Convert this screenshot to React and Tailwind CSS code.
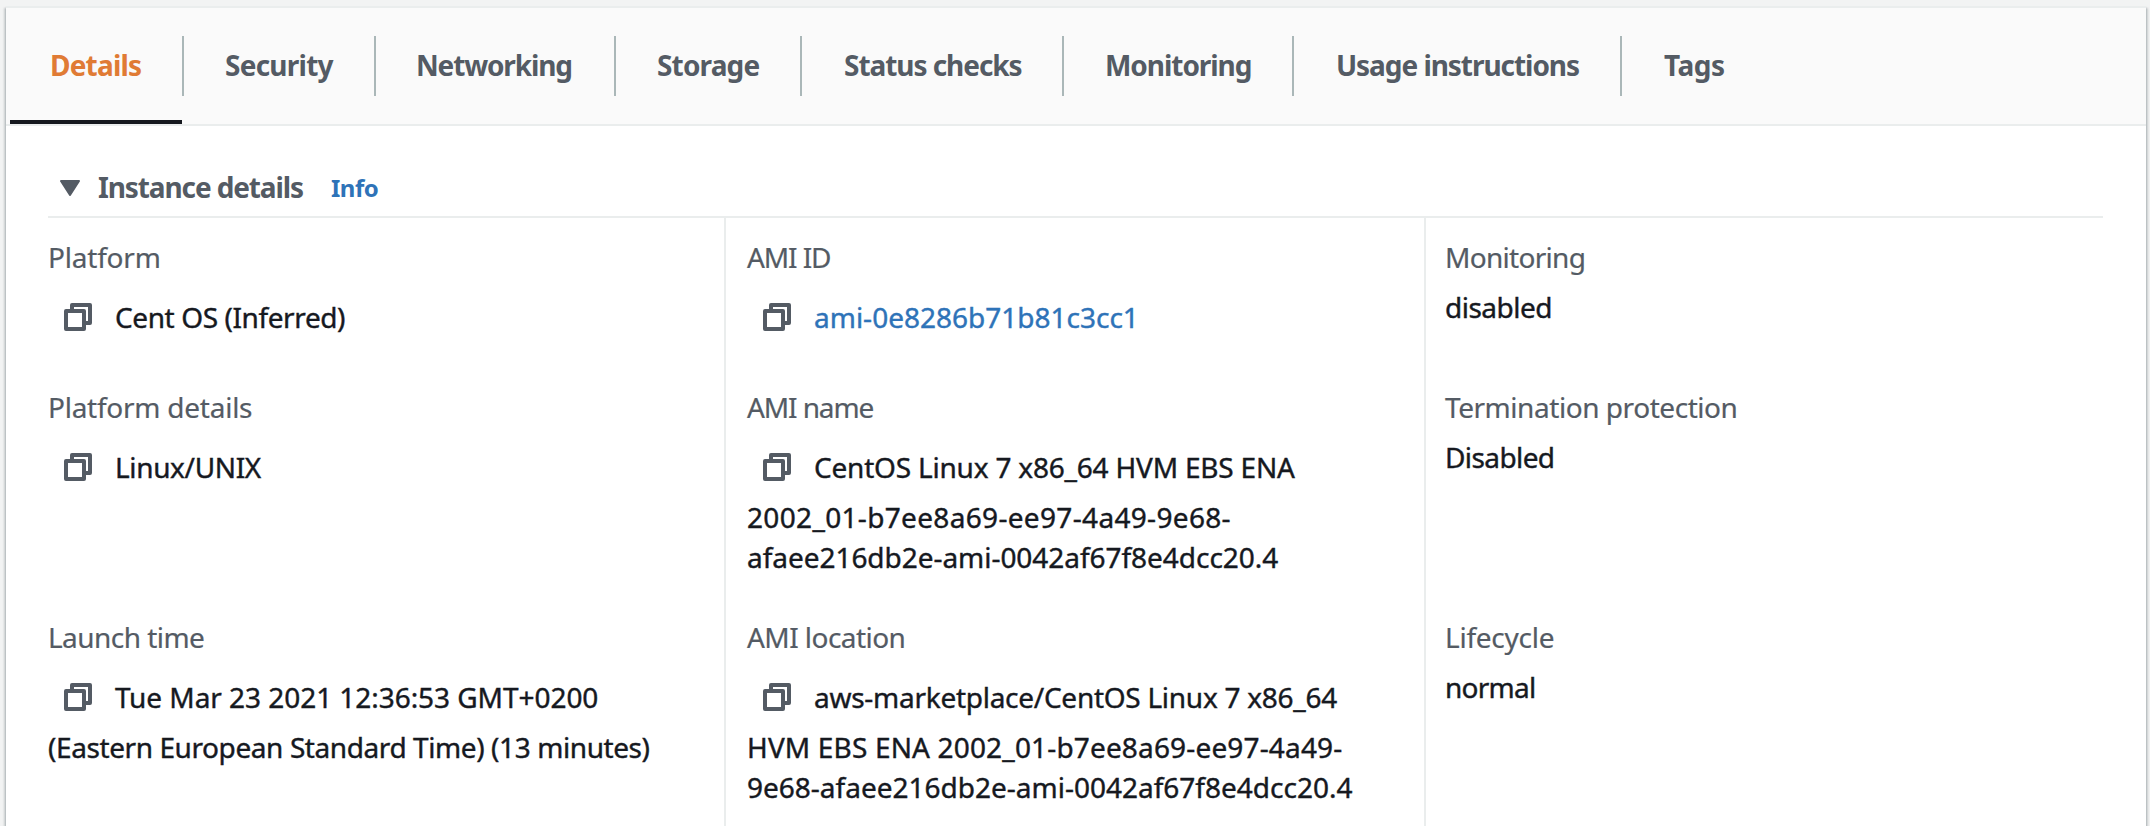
const tabs = [
  { label: 'Details', width: 'w-[172px]', text: 'pl-[40px] tracking-[-0.8px]', active: true },
  { label: 'Security', width: 'w-[190px]', text: 'pl-[41px] tracking-[-0.75px]' },
  { label: 'Networking', width: 'w-[238px]', text: 'pl-[40px] tracking-[-1.15px]' },
  { label: 'Storage', width: 'w-[184px]', text: 'pl-[41px] tracking-[-0.85px]' },
  { label: 'Status checks', width: 'w-[260px]', text: 'pl-[42px] tracking-[-1.05px]' },
  { label: 'Monitoring', width: 'w-[228px]', text: 'pl-[41px] tracking-[-1.05px]' },
  { label: 'Usage instructions', width: 'w-[326px]', text: 'pl-[42px] tracking-[-1.05px]' },
  { label: 'Tags', width: 'w-[200px]', text: 'pl-[42px] tracking-[-0.5px]', last: true },
];

const fields = [
  { label: 'Platform', ls: 'tracking-[-0.2px]', copy: true, lines: [['Cent OS (Inferred)', 'tracking-[-0.4px]']] },
  { label: 'AMI ID', ls: 'tracking-[-1.1px]', copy: true, link: true, lines: [['ami-0e8286b71b81c3cc1', 'tracking-[0px]']] },
  { label: 'Monitoring', ls: 'tracking-[-0.7px]', lines: [['disabled', 'tracking-[-0.5px]']] },
  { label: 'Platform details', ls: 'tracking-[-0.25px]', copy: true, lines: [['Linux/UNIX', 'tracking-[-0.35px]']] },
  {
    label: 'AMI name', ls: 'tracking-[-1.1px]', copy: true,
    lines: [
      ['CentOS Linux 7 x86_64 HVM EBS ENA', 'tracking-[-0.2px]'],
      ['2002_01-b7ee8a69-ee97-4a49-9e68-', 'tracking-[0.33px]'],
      ['afaee216db2e-ami-0042af67f8e4dcc20.4', 'tracking-[-0.04px]'],
    ],
  },
  { label: 'Termination protection', ls: 'tracking-[-0.45px]', lines: [['Disabled', 'tracking-[-0.6px]']] },
  {
    label: 'Launch time', ls: 'tracking-[-0.55px]', copy: true,
    lines: [
      ['Tue Mar 23 2021 12:36:53 GMT+0200', 'tracking-[-0.05px]'],
      ['(Eastern European Standard Time) (13 minutes)', 'tracking-[-0.41px]'],
    ],
  },
  {
    label: 'AMI location', ls: 'tracking-[-0.55px]', copy: true,
    lines: [
      ['aws-marketplace/CentOS Linux 7 x86_64', 'tracking-[-0.27px]'],
      ['HVM EBS ENA 2002_01-b7ee8a69-ee97-4a49-', 'tracking-[0.16px]'],
      ['9e68-afaee216db2e-ami-0042af67f8e4dcc20.4', 'tracking-[0px]'],
    ],
  },
  { label: 'Lifecycle', ls: 'tracking-[-0.25px]', lines: [['normal', 'tracking-[-0.75px]']] },
];

function CopyIcon() {
  return (
    <svg className="ml-[16px] mr-[23px] h-7 w-7 shrink-0" viewBox="0 0 28 28" fill="none" stroke="#545b64" strokeWidth="4" strokeLinejoin="round">
      <rect x="8" y="2" width="18" height="18" />
      <rect x="2" y="8" width="18" height="18" fill="#fff" />
    </svg>
  );
}

function Tab({ tab }) {
  return (
    <div className="flex h-[116px] shrink-0">
      <div className={`flex flex-col justify-between ${tab.width}`}>
        <span className={`whitespace-nowrap pt-[37px] text-[28px] leading-10 font-bold ${tab.text} ${tab.active ? 'text-[#e07b34]' : 'text-[#545b64]'}`}>
          {tab.label}
        </span>
        {tab.active && <div className="h-1 bg-[#16191f]" />}
      </div>
      {!tab.last && <div className="mt-7 h-[60px] w-[2px] bg-[#aab7b8]" />}
    </div>
  );
}

function Field({ field, column, top }) {
  const [first, ...rest] = field.lines;
  const cell = [
    'border-r-2 border-[#eaeded]',
    'border-r-2 border-[#eaeded] pl-[21px]',
    'pl-[19px]',
  ][column];
  return (
    <div className={`whitespace-nowrap pb-10 ${top ? 'pt-[19px]' : ''} ${cell}`}>
      <div className={`text-[#545b64] [-webkit-text-stroke:0.2px] ${field.ls}`}>{field.label}</div>
      <div className={`flex items-center [-webkit-text-stroke:0.4px] ${field.copy ? 'pt-5 pb-2.5' : 'pt-2.5'} ${field.link ? 'text-[#2e73b8]' : ''}`}>
        {field.copy && <CopyIcon />}
        <span className={first[1]}>{first[0]}</span>
      </div>
      {rest.map(([text, ls]) => (
        <div key={text} className={`[-webkit-text-stroke:0.4px] ${ls}`}>{text}</div>
      ))}
    </div>
  );
}

export default function App() {
  return (
    <div className="h-[826px] w-[2150px] overflow-hidden bg-[#f2f3f3] px-[6px] pt-[6px] font-['Noto_Sans','Open_Sans',sans-serif] text-[28px] leading-10 text-[#16191f]">
      <div className="h-[900px] w-[2140px] border-t-2 border-[#eaeded] bg-white shadow-[0_2px_2px_0_rgba(0,28,36,0.3),2px_2px_2px_0_rgba(0,28,36,0.15),-2px_2px_2px_0_rgba(0,28,36,0.15)]">
        <nav className="flex h-[118px] border-b-2 border-[#eaeded] bg-[#fafafa] pl-1">
          {tabs.map((tab) => <Tab key={tab.label} tab={tab} />)}
        </nav>
        <section className="ml-[42px] w-[2055px]">
          <header className="flex h-[92px] items-start border-b-2 border-[#eaeded] pt-[41px]">
            <svg className="mt-[13px] ml-3 h-4 w-5" viewBox="0 0 20 16" fill="#545b64" stroke="#545b64" strokeWidth="2" strokeLinejoin="round">
              <path d="M1 1H19L10 15Z" />
            </svg>
            <h2 className="ml-[18px] w-[233px] whitespace-nowrap font-bold tracking-[-1.12px] text-[#545b64]">Instance details</h2>
            <span className="pt-[1px] text-2xl leading-10 font-bold tracking-[-0.5px] text-[#2e73b8]">Info</span>
          </header>
          <div className="grid grid-cols-[678px_700px_1fr]">
            {fields.map((field, i) => <Field key={field.label} field={field} column={i % 3} top={i < 3} />)}
          </div>
        </section>
      </div>
    </div>
  );
}
